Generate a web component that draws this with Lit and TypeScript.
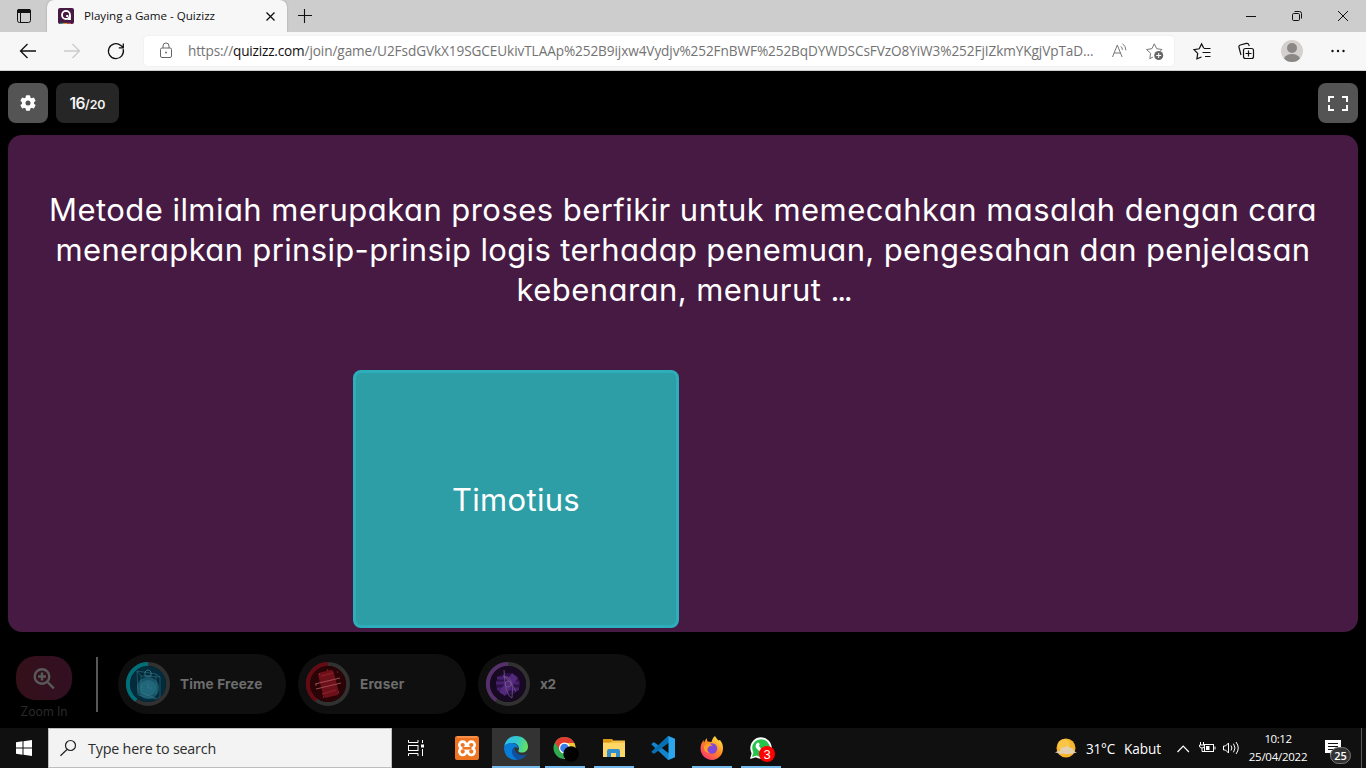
import { LitElement, html, svg, css, TemplateResult, SVGTemplateResult } from "lit";
import { customElement, property } from "lit/decorators.js";

/** One line of text whose tracking is adjusted so that it spans a given width. */
@customElement("fit-text")
class FitText extends LitElement {
  @property() text = "";
  @property({ type: Number }) span = 0;
  static styles = css`
    :host { display: inline-block; white-space: pre; }
    .line { display: inline-block; }
  `;
  render() {
    return html`<span class="line">${this.text}</span>`;
  }
  updated() {
    const el = this.renderRoot.querySelector(".line") as HTMLElement;
    el.style.letterSpacing = "0px";
    const natural = el.getBoundingClientRect().width;
    const step = (this.span - natural) / this.text.length;
    el.style.letterSpacing = step + "px";
  }
}

const icon = (x: number, y: number, w: number, h: number, body: SVGTemplateResult) =>
  html`<svg width=${w} height=${h} viewBox="${x} ${y} ${w} ${h}" fill="none">${body}</svg>`;

const fit = (text: string, span: number) => html`<fit-text .text=${text} .span=${span}></fit-text>`;

@customElement("app-root")
class AppRoot extends LitElement {
  static styles = css`
    :host { display: flex; flex-direction: column; width: 1366px; height: 768px; overflow: hidden;
      background: #000; font-family: "Open Sans", "Noto Sans", sans-serif; }
    * { box-sizing: border-box; }
    svg { display: block; overflow: visible; }

    .tabs { height: 32px; background: #cdcdcd; display: flex; align-items: center; color: #111; flex: none; }
    .tabmenu { width: 47px; padding-left: 16px; }
    .tab { width: 240px; height: 32px; background: #f7f7f7; border-radius: 7px 7px 0 0; display: flex;
      align-items: center; padding-left: 11px; font-size: 11.6px; box-shadow: 0 0 2px #999; }
    .tab .title { margin-left: 10px; flex: 1; margin-top: -1px; }
    .tab .close { margin-right: 12px; }
    .plus { margin-left: 11px; flex: 1; }
    .win { display: grid; grid-template-columns: 46px 46px 46px; justify-items: center; }

    .bar { height: 39px; background: #f7f7f7; border-bottom: 1px solid #cfcfcf; display: flex; align-items: center; flex: none; }
    .nav { width: 144px; display: grid; grid-template-columns: 44px 44px 40px; padding-left: 19px; align-items: center; }
    .address { width: 1030px; height: 30px; margin-top: -1px; background: #fff; border-radius: 4px; display: flex; align-items: center;
      padding-left: 14px; font-size: 13.6px; color: #737373; box-shadow: 0 0 2px #e2e2e2; }
    .url { margin-left: 14px; flex: 1; display: flex; line-height: 20px; }
    .host { color: #111; }
    .inbar { display: flex; gap: 17px; padding-right: 10px; }
    .tools { flex: 1; display: grid; grid-template-columns: 46px 42px 50px 30px; padding-left: 19px; align-items: center; }

    .game { height: 657px; flex: none; background: #000; padding: 12px 8px 0; color: #fff;
      font-family: Inter, "Open Sans", sans-serif; font-feature-settings: "cv11" 1; }
    .head { display: flex; gap: 8px; height: 40px; }
    .sq { width: 40px; height: 40px; border-radius: 8px; background: #545454; display: grid; place-items: center; }
    .count { width: 63px; border-radius: 8px; background: #262626; display: flex; align-items: baseline;
      justify-content: center; font-weight: 600; font-size: 15.6px; line-height: 41px; color: #f4f4f4; }
    .count small { font-size: 12.4px; }
    .grow { flex: 1; }
    .panel { margin-top: 12px; height: 497px; border-radius: 14px; background: #461a42; display: flex;
      flex-direction: column; align-items: center; padding-top: 55px; font-size: 31px; line-height: 40px; }
    .question { display: flex; flex-direction: column; align-items: center; }
    .last { display: flex; padding-left: 1px; }
    .answers { width: 660px; margin-top: 60px; display: flex; }
    .card { width: 326px; height: 258px; border-radius: 8px; border: 3px solid #2dafbb; background: #2d9da6;
      display: grid; place-items: center; padding-top: 2px; }
    .powers { display: flex; padding-top: 22px; }
    .zoom { width: 88px; display: flex; flex-direction: column; padding-left: 8px; }
    .zbtn { width: 56px; height: 44px; margin-top: 2px; border-radius: 20px; background: linear-gradient(90deg, #34101a, #331022);
      display: grid; place-items: center; }
    .zlabel { width: 56px; text-align: center; font-size: 12.4px; line-height: 15px; margin-top: 4px; color: #292929; }
    .rule { width: 2px; height: 55px; margin-top: 3px; background: #585858; }
    .pills { display: flex; gap: 12px; margin-left: 20px; }
    .pill { width: 168px; height: 60px; border-radius: 30px; background: #0f0f0f; display: flex; align-items: center;
      gap: 10px; padding-left: 8px; font-weight: 700; font-size: 13.6px; color: #6c6c6c; }

    .task { height: 40px; flex: none; background: #101010; display: flex; color: #fff; }
    .start { width: 48px; display: grid; place-items: center; }
    .search { width: 344px; background: #f3f3f3; border: 1px solid #bdbdbd; display: flex; align-items: center; gap: 12px;
      padding-left: 11px; font-size: 14.3px; color: #2c2c2c; }
    .apps { display: flex; gap: 1px; }
    .app { width: 48px; height: 40px; display: grid; place-items: center; }
    .view { margin-right: 2px; }
    .run { background: linear-gradient(#76b9ed, #76b9ed) 50% 100% / 40px 2px no-repeat; }
    .active { background: linear-gradient(#76b9ed, #76b9ed) 50% 100% / 48px 2px no-repeat #333; }
    .tray { flex: 1; display: flex; align-items: center; justify-content: flex-end; font-size: 13.6px; }
    .weather { display: flex; align-items: center; gap: 9px; margin-right: 16px; }
    .sys { display: flex; align-items: center; gap: 8px; margin-right: 8px; }
    .chev { margin-right: 2px; }
    .clock { width: 60px; display: flex; flex-direction: column; align-items: center; font-size: 11.5px; line-height: 18px; margin-right: 17px; }
    .note { width: 36px; }
    .edge { width: 5px; height: 40px; border-left: 1px solid #5a5a5a; }
    .badge { font-family: "Open Sans", sans-serif; font-size: 11px; font-weight: 600; }
    .wabadge { font-family: "Liberation Sans", sans-serif; font-size: 13px; }
  `;

  private ring(x: number, color: string, disc: string, art: SVGTemplateResult) {
    return icon(x, 662, 44, 44, svg`
      <g transform="translate(${x + 22} 684)">
        <circle r="20" stroke="#313131" stroke-width="4"/>
        <path d="M0 -20A20 20 0 0 0 -11.8 16.2" stroke=${color} stroke-width="4"/>
        <circle r="18" fill=${disc}/>${art}
      </g>`);
  }

  private pill(label: string, span: number, ring: TemplateResult) {
    return html`<div class="pill">${ring}${fit(label, span)}</div>`;
  }

  private tabStrip() {
    return html`<div class="tabs">
      <div class="tabmenu">${icon(16, 8, 16, 16, svg`
        <rect x="17.5" y="9.5" width="13" height="13" rx="2" stroke="#111"/>
        <path d="M17 12v-1q0-2 2-2h10q2 0 2 2v2H17z" fill="#111"/><path d="M20.5 13v9" stroke="#111"/>`)}</div>
      <div class="tab">
        ${icon(58, 8, 16, 16, svg`<rect x="58" y="8" width="16" height="16" rx="2" fill="#461a42"/>
          <path d="M60 23.4h3" stroke="#2d9da6"/><path d="M63 23.4h4" stroke="#efa929"/><path d="M67 23.4h4" stroke="#d5546d"/>
          <circle cx="66" cy="15" r="3.9" stroke="#fff" stroke-width="2"/><path d="M66.5 15.5h4.4v4.6h-3z" fill="#fff"/><circle cx="66" cy="15" r="2.9" fill="#461a42"/><path d="M66.2 15h2v2h-2z" fill="#fff"/>`)}
        <div class="title">${fit("Playing a Game - Quizizz", 131)}</div>
        <div class="close">${icon(266, 12, 9, 9, svg`<path d="M266.5 12.5l8 8m0-8l-8 8" stroke="#111" stroke-width="1.3"/>`)}</div>
      </div>
      <div class="plus">${icon(298, 9, 14, 14, svg`<path d="M298 15.5h14M304.5 9v14" stroke="#111" stroke-width="1.1"/>`)}</div>
      <div class="win">
        ${icon(1246, 11, 10, 10, svg`<path d="M1246 16.5h10" stroke="#111"/>`)}
        ${icon(1292, 11, 10, 10, svg`<rect x="1292.5" y="13.5" width="7" height="7" rx="1.2" stroke="#111"/>
          <path d="M1294.5 11.5h5q2 0 2 2v5" stroke="#111"/>`)}
        ${icon(1338, 11, 10, 10, svg`<path d="M1338 11l10 10m0-10l-10 10" stroke="#111"/>`)}
      </div>
    </div>`;
  }

  private toolbar() {
    return html`<div class="bar">
      <div class="nav">
        ${icon(19, 43, 18, 16, svg`<path d="M36 51H20.5M27.5 44l-7 7 7 7" stroke="#111" stroke-width="1.3"/>`)}
        ${icon(63, 43, 18, 16, svg`<path d="M64 51h15.5M72.5 44l7 7-7 7" stroke="#ccc" stroke-width="1.3"/>`)}
        ${icon(107, 43, 18, 16, svg`<path d="M123.2 49.2A7.5 7.5 0 1 1 120.8 45.4L123 47.3M123.3 43.5v4.3h-4.5" stroke="#111" stroke-width="1.3"/>`)}
      </div>
      <div class="address">
        ${icon(158, 43, 16, 16, svg`<rect x="160.5" y="48" width="11" height="9.5" rx="1.5" stroke="#666"/>
          <path d="M163 48v-2q0-3 3-3t3 3v2" stroke="#666"/><circle cx="166" cy="52.5" r=".9" fill="#666"/>`)}
        <div class="url">${fit("https://", 45)}<span class="host">${fit("quizizz.com", 71.5)}</span>${fit("/join/game/U2FsdGVkX19SGCEUkivTLAAp%252B9ijxw4Vydjv%252FnBWF%252BqDYWDSCsFVzO8YiW3%252FjIZkmYKgjVpTaD...", 789)}</div>
        <div class="inbar">
          ${icon(1110, 42, 18, 18, svg`<path d="M1111.5 57l4.8-12 4.8 12M1113 53h6.5M1119.8 46.3q1.6 1.4 1.6 3.6M1121.5 43.7q3.4 2.6 3.4 6.6" stroke="#777"/>`)}
          ${icon(1146, 42, 18, 18, svg`<path d="M1153 57l-3.2 1.7.8-5.4-4-3.8 5.3-.8 2.4-4.9 2.4 4.9 5.2.8-2 2" stroke="#777"/>
            <circle cx="1158.7" cy="55.5" r="4.5" fill="#666"/><path d="M1156.2 55.5h5M1158.7 53v5" stroke="#fff"/>`)}
        </div>
      </div>
      <div class="tools">
        ${icon(1193, 42, 18, 18, svg`<path d="M1201.5 57l-4.6 1.8.8-5.4-3.7-3.8 5.2-.8 2.4-4.9 2.2 4.3" stroke="#111" stroke-width="1.2"/>
          <path d="M1204 48.5h6.5M1202.5 52.5h8M1205 56.5h5.5" stroke="#111" stroke-width="1.2"/>`)}
        ${icon(1239, 42, 18, 18, svg`<rect x="1243.5" y="48.5" width="10" height="10" rx="2" stroke="#111" stroke-width="1.2"/>
          <path d="M1248.5 50.5v6M1245.5 53.5h6M1241 55l-2-7.500q-.5-2 1.300-2.500l6-1.600q2-.5 2.500 1.300l.4 1.300" stroke="#111" stroke-width="1.2"/>`)}
        ${icon(1281, 40, 22, 22, svg`<circle cx="1292" cy="51" r="11" fill="#d3d0cd"/><circle cx="1292" cy="48" r="5" fill="#8b8785"/>
          <path d="M1284 58.500q2-4.500 8-4.500t8 4.500q-3 3.500-8 3.500t-8-3.500z" fill="#8b8785"/>`)}
        ${icon(1331, 49, 14, 4, svg`<circle cx="1332.5" cy="51" r="1.2" fill="#111"/><circle cx="1338" cy="51" r="1.2" fill="#111"/><circle cx="1343.5" cy="51" r="1.2" fill="#111"/>`)}
      </div>
    </div>`;
  }

  private game() {
    return html`<div class="game">
      <div class="head">
        <div class="sq">${icon(-8, -8, 16, 16, svg`
          <g fill="#fff"><rect x="-2.2" y="-7.8" width="4.4" height="15.6" rx="1"/>
          <rect x="-2.2" y="-7.8" width="4.4" height="15.6" rx="1" transform="rotate(60)"/>
          <rect x="-2.2" y="-7.8" width="4.4" height="15.6" rx="1" transform="rotate(120)"/><circle r="6.1"/></g>
          <circle r="2.5" fill="#545454"/>`)}</div>
        <div class="count">${fit("16", 15.5)}<small>${fit("/20", 20.5)}</small></div>
        <div class="grow"></div>
        <div class="sq">${icon(1328, 95, 20, 16, svg`<path d="M1334 97h-5v5m0 3v5h5M1342 97h5v5m0 3v5h-5" stroke="#fff" stroke-width="2"/>`)}</div>
      </div>
      <div class="panel">
        <div class="question">
          ${fit("Metode ilmiah merupakan proses berfikir untuk memecahkan masalah dengan cara", 1268)}
          ${fit("menerapkan prinsip-prinsip logis terhadap penemuan, pengesahan dan penjelasan", 1255)}
          <div class="last">${fit("kebenaran, menurut ", 314)}${fit("...", 20)}</div>
        </div>
        <div class="answers"><div class="card">${fit("Timotius", 128)}</div></div>
      </div>
      <div class="powers">
        <div class="zoom">
          <div class="zbtn">${icon(33, 666, 22, 22, svg`<circle cx="42" cy="675.5" r="7.3" stroke="#595959" stroke-width="2.4"/>
            <path d="M47.5 681l6.300 6.300M38 675.5h8M42 671.5v8" stroke="#595959" stroke-width="2.4"/>`)}</div>
          <div class="zlabel">${fit("Zoom In", 47)}</div>
        </div>
        <div class="rule"></div>
        <div class="pills">
          ${this.pill("Time Freeze", 82.5, this.ring(126, "#006f78", "#032b3b", svg`
            <circle cy="4" r="11" fill="#165467"/><circle cy="4" r="8" fill="#21677a"/>
            <path d="M0 -1v5h4M-3-8h6v-4q-3-4-6 0z" stroke="#2c7485"/>
            <path d="M-11-13l19 3 4 3v20L8 15l-18-4zM-11-13l4 5 19 1M-7-8v17l15 5M8-10v21" stroke="#3f7f8e" stroke-width=".8" opacity=".6"/>`))}
          ${this.pill("Eraser", 44.5, this.ring(306, "#650912", "#290306", svg`
            <rect x="-7.5" y="-13" width="16" height="26" rx="3" fill="#6c1019" transform="rotate(-14)"/>
            <path d="M-13 0L12-6M-12 5L13-1" stroke="#a04a50"/><path d="M-7-8L5-11M-6 10L8 6" stroke="#861c26" stroke-width="1.5"/>
            <path d="M-13 1h2M-9-10h1M-1-14h1M9-12h1M10 8h1M-5 13h1" stroke="#a33b42"/>`))}
          ${this.pill("x2", 15.5, this.ring(486, "#55306a", "#170922", svg`
            <ellipse rx="12" ry="11" fill="#2e114b"/><path d="M-11-6H9M-12-1h23M-11 5H11" stroke="#48206d" stroke-width="3"/>
            <path d="M-9 8L4-11l6 5L-3 12z" fill="#52297b"/><path d="M-4-14Q-3 12 4 14Q7-8-5-8Q4-2 8 8" stroke="#71568a" stroke-width=".8"/><circle r="3" stroke="#71568a" stroke-width=".8"/>`))}
        </div>
      </div>
    </div>`;
  }

  private taskbar() {
    return html`<div class="task">
      <div class="start">${icon(16, 740, 16, 16, svg`<path d="M16 742.2l6.500-.9v6.200H16zM23.500 741.2l8.500-1.200v7.500h-8.500zM16 748.500h6.500v6.200l-6.500-.9zM23.500 748.500H32v7.500l-8.500-1.200z" fill="#fff"/>`)}</div>
      <div class="search">
        ${icon(60, 740, 16, 16, svg`<circle cx="70.5" cy="745.5" r="5" stroke="#222" stroke-width="1.2"/><path d="M67 749.500l-6.500 6.300" stroke="#222" stroke-width="1.2"/>`)}
        ${fit("Type here to search", 128)}
      </div>
      <div class="apps">
        <div class="app view">${icon(408, 740, 16, 16, svg`<path d="M408.500 740v2.500h9.500V740M408.500 756v-2.500h9.500v2.500M422.500 740v3M422.500 749v7" stroke="#fff"/>
          <rect x="408.5" y="745.5" width="9.5" height="5" stroke="#fff"/><rect x="421" y="744.5" width="3" height="3" fill="#fff"/>`)}</div>
        <div class="app">${icon(-12, -12, 24, 24, svg`<rect x="-12" y="-12" width="24" height="24" rx="2" fill="#ef7421"/>
          <path d="M-10-11h20" stroke="#ffad72"/>
          <g fill="#fff"><circle cx="-4.3" cy="-3" r="4.7"/><circle cx="4.3" cy="-3" r="4.7"/><circle cx="-4.3" cy="3.600" r="4.7"/><circle cx="4.3" cy="3.600" r="4.7"/><rect x="-5" y="-4" width="10" height="8.500"/></g>
          <g fill="#ef7421"><circle cx="-4.3" cy="-3" r="2.100"/><circle cx="4.3" cy="-3" r="2.100"/><circle cx="-4.3" cy="3.600" r="2.100"/><circle cx="4.3" cy="3.600" r="2.100"/><rect x="-4.500" y="-1" width="9" height="2.600"/></g>`)}</div>
        <div class="app active">${icon(0, 0, 24, 24, svg`
          <defs><linearGradient id="ea" x1="0" x2="1" y1=".3" y2=".5"><stop stop-color="#30bdf0"/><stop offset=".55" stop-color="#34c8c8"/><stop offset="1" stop-color="#66e45d"/></linearGradient></defs>
          <path d="M.2 10.500C1.500 3.500 6.300 0 12 0c7 0 12 5 12 10.500 0 4-3 6-6 6-2.500 0-4.200-.8-3.400-2.200C16 11 13 7 9 7 5 7 1.500 8.500.2 10.500z" fill="url(#ea)"/>
          <path d="M.2 10.500C1.500 8 5 6.600 8.300 7c3.500.4 5.900 2.800 5.700 5.200-.7-1-2.300-1.500-3.700-.6-3 2-1.600 9 3.700 12.200C6 25-.8 19 .2 10.500z" fill="#087dd8"/>
          <path d="M10.300 11.600C6 14 8 21.500 14 23.800c4 0 7.700-3.300 8.700-5.800-5.500 3-11.700 0-12.400-6.400z" fill="#1050a0"/>`)}</div>
        <div class="app run">${icon(-12, -12, 24, 24, svg`<circle cx="-.5" r="11" fill="#30a951"/>
          <path d="M-10-5.500A11 11 0 0 1 9.300-5H-.5L-5 3z" fill="#e23c31"/><path d="M10.100-3A11 11 0 0 1-1 11L4 2-.5-5h9.800z" fill="#f7c631"/>
          <circle cx="-.5" r="5.5" fill="#fff"/><circle cx="-.5" r="4.3" fill="#3b7ee8"/><circle cx="6" cy="6" r="7.7" fill="#000"/>`)}</div>
        <div class="app run">${icon(603, 736, 22, 24, svg`<path d="M603 739h9l1 1.500h12v16h-22z" fill="#f6c242"/><path d="M603 739h9l1 2-3 1.500h-7z" fill="#dc9811"/>
          <path d="M603 743h22v14h-22z" fill="#ffd766"/><path d="M607 757v-6q0-2 2-2h9q2 0 2 2v6h-4v-4h-5v4z" fill="#338ecf"/>`)}</div>
        <div class="app">${icon(0, 0, 24, 24, svg`<path d="M.3 8.200L2 6.600h1.600L18 17.600V24h-1z" fill="#1485cc"/>
          <path d="M.3 15.800L2 17.400h1.600L18 6.400V0h-1z" fill="#0870b2"/><path d="M17.500 0L24 2.700v18.600L17.500 24z" fill="#2ba5ee"/>`)}</div>
        <div class="app run">${icon(0, 0, 24, 24, svg`
          <defs><linearGradient id="ff" x1=".9" x2=".2" y1=".1" y2="1"><stop stop-color="#ffe443"/><stop offset=".45" stop-color="#ff8a21"/><stop offset="1" stop-color="#f92f73"/></linearGradient></defs>
          <path d="M15 0c1 2 2.200 3.200 3.500 4.500L20 4c2 2.500 3 5 3 8.300C23 19 18 24 12 24S.5 19 .5 12.500C.5 9 1.800 6 3.800 4v3L6.500 2l1 3.500 4 .5C12 4 13 1.500 15 0z" fill="url(#ff)"/>
          <circle cx="12" cy="12.5" r="5.2" fill="#8348d7"/><path d="M4 10q4-5 9 0-4-1-5 2-2 3 2 5-7 0-6-7z" fill="#ff9f28"/>`)}</div>
        <div class="app run">${icon(749, 736, 24, 24, svg`<circle cx="761" cy="748" r="10.7" fill="#fff"/><path d="M750 759l2-7 5 5z" fill="#fff"/>
          <circle cx="761" cy="748" r="8.8" fill="#25c34b"/><path d="M752 757l1.500-5 3 3.500z" fill="#25c34b"/>
          <path d="M757 743q2-1.500 2.600 1.500l-.6 1.500q1.600 3 4 3.700l1.500-1q3 1 1.300 3-2 2-5.300 0Q753 747.500 757 743z" fill="#fff"/>
          <circle cx="767" cy="754" r="8" fill="#f00"/><text x="767" y="758.5" text-anchor="middle" fill="#fff" class="wabadge">3</text>`)}</div>
      </div>
      <div class="tray">
        <div class="weather">
          ${icon(1055, 738, 22, 20, svg`<circle cx="1066" cy="748" r="9.5" fill="#f6b52a"/><circle cx="1064" cy="745" r="6" fill="#fbd05a" opacity=".6"/>
            <path d="M1055 752.500q2-2 5-1.500 1-4.500 5-3.500 2-3 5 .5 4-.5 3.500 3l3.500 1.500q-5 1.500-11 1.500t-11-1.500z" fill="#dfd2bf" opacity=".9"/>`)}
          ${fit("31°C", 29)}${fit("Kabut", 37)}
        </div>
        <div class="sys">
          <div class="chev">${icon(1177, 742, 12, 10, svg`<path d="M1177.500 751l5.700-6 5.700 6" stroke="#fff" stroke-width="1.2"/>`)}</div>
          ${icon(1199, 740, 16, 16, svg`<rect x="1204.5" y="744.5" width="9" height="7" stroke="#fff"/><path d="M1215 746.500v3" stroke="#fff"/><rect x="1206" y="746" width="3.5" height="4" fill="#fff"/>
            <path d="M1199.500 745h5v1q0 2-2.500 2t-2.500-2zM1200.500 742v3M1203.500 742v3M1202 748v3.500h2" stroke="#fff" fill="#101010"/>`)}
          ${icon(1223, 741, 17, 14, svg`<path d="M1223.500 746v4h2l3 3v-10l-3 3zM1231 745.500q1.800 2.500 0 5M1233.500 743.700q3 4.300 0 8.600M1236 742q4.500 6 0 12" stroke="#fff"/>`)}
        </div>
        <div class="clock">${fit("10:12", 27)}${fit("25/04/2022", 58.5)}</div>
        <div class="note">${icon(1325, 728, 26, 40, svg`<path d="M1325 740h16v13h-8l-3 3v-3h-5z" fill="#fff"/><path d="M1328 743.500h10M1328 746.500h10M1328 749.500h6" stroke="#101010"/>
          <rect x="1330.5" y="747.5" width="20" height="16" rx="8" fill="#333" stroke="#777"/><text x="1340.5" y="759.5" text-anchor="middle" fill="#fff" class="badge">25</text>`)}</div>
        <div class="edge"></div>
      </div>
    </div>`;
  }

  render() {
    return html`${this.tabStrip()}${this.toolbar()}${this.game()}${this.taskbar()}`;
  }
}
